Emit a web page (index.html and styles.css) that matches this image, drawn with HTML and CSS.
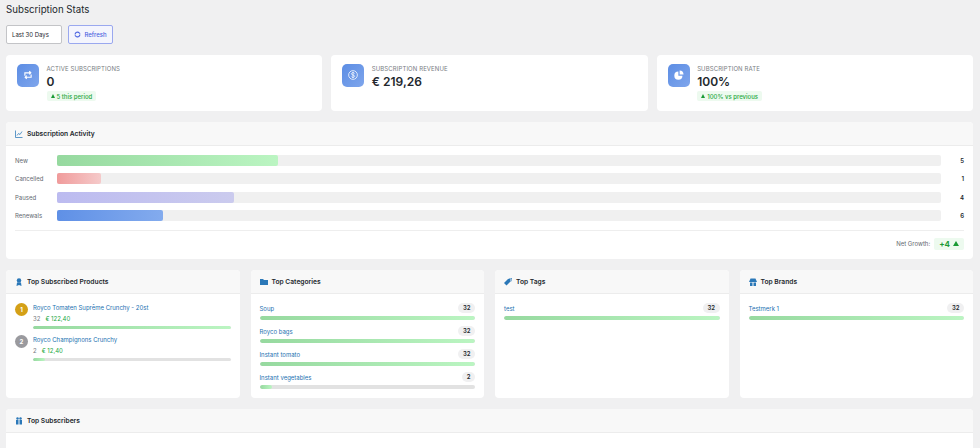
FILE: index.html
```html
<!DOCTYPE html>
<html lang="en">
<head>
  <meta charset="UTF-8" />
  <title>Subscription Stats</title>
  <link rel="stylesheet" href="styles.css">
</head>
<body>
  <h1>Subscription Stats</h1>

  <div class="toolbar">
    <div class="range">Last 30 Days</div>
    <button class="refresh">
      <svg width="7" height="7" viewBox="0 0 16 16" fill="none" stroke="#4a63e0" stroke-width="2.600"><path d="M2.500 8a5.500 5.500 0 0 1 9.500-3.800L14 6M13.500 8a5.500 5.500 0 0 1-9.500 3.800L2 10"/></svg>
      Refresh
    </button>
  </div>

  <div class="stats">
    <div class="stat">
      <div class="stat-icon">
        <svg width="10" height="10" viewBox="0 0 16 16" fill="none" stroke="#fff" stroke-width="1.800"><path d="M3 9V4.500h9M10 2l2.500 2.500L10 7M13 7v4.500H4M6 14l-2.500-2.500L6 9"/></svg>
      </div>
      <div>
        <div class="stat-label">ACTIVE SUBSCRIPTIONS</div>
        <div class="stat-value">0</div>
        <div class="trend"><span class="tri"></span>5 this period</div>
      </div>
    </div>
    <div class="stat">
      <div class="stat-icon">
        <svg width="10" height="10" viewBox="0 0 16 16" fill="none" stroke="#fff" stroke-width="1.200"><circle cx="8" cy="8" r="7"/><path d="M10.500 5.500C10 4.500 9 4.200 8 4.200c-1.400 0-2.500.7-2.500 1.900 0 2.700 5 1.200 5 3.800 0 1.200-1.100 1.900-2.500 1.900-1.100 0-2.100-.4-2.600-1.400M8 3v10"/></svg>
      </div>
      <div>
        <div class="stat-label">SUBSCRIPTION REVENUE</div>
        <div class="stat-value">€ 219,26</div>
      </div>
    </div>
    <div class="stat">
      <div class="stat-icon">
        <svg width="10" height="10" viewBox="0 0 16 16" fill="#fff"><path d="M7 2.500a6.500 6.500 0 1 0 6.500 6.500H7z"/><path d="M9 .8V7h6.200A6.400 6.400 0 0 0 9 .8z"/></svg>
      </div>
      <div>
        <div class="stat-label">SUBSCRIPTION RATE</div>
        <div class="stat-value">100%</div>
        <div class="trend"><span class="tri"></span>100% vs previous</div>
      </div>
    </div>
  </div>

  <section class="card activity">
    <div class="card-head">
      <svg viewBox="0 0 16 16" fill="none" stroke="#2b78b8" stroke-width="1.500"><path d="M1 1v14h14"/><path d="M4 11l3-4 3 2 4-6"/></svg>
      Subscription Activity
    </div>
    <div class="activity-body">
      <div class="bar-row">
        <span class="bar-label">New</span>
        <div class="track"><div class="fill green" style="width:25%"></div></div>
        <span class="bar-num">5</span>
      </div>
      <div class="bar-row">
        <span class="bar-label">Cancelled</span>
        <div class="track"><div class="fill red" style="width:5%"></div></div>
        <span class="bar-num">1</span>
      </div>
      <div class="bar-row">
        <span class="bar-label">Paused</span>
        <div class="track"><div class="fill purple" style="width:20%"></div></div>
        <span class="bar-num">4</span>
      </div>
      <div class="bar-row">
        <span class="bar-label">Renewals</span>
        <div class="track"><div class="fill blue" style="width:12%"></div></div>
        <span class="bar-num">6</span>
      </div>
      <div class="net">
        Net Growth:
        <span class="net-pill">+4 <span class="tri big"></span></span>
      </div>
    </div>
  </section>

  <div class="tops">
    <section class="card">
      <div class="card-head">
        <svg viewBox="0 0 16 16" fill="#2b78b8"><circle cx="8" cy="5" r="4.500"/><path d="M4 9l-1 7 5-2 5 2-1-7z"/></svg>
        Top Subscribed Products
      </div>
      <div class="products">
        <div class="product">
          <span class="rank gold">1</span>
          <div class="product-main">
            <a class="link">Royco Tomaten Suprême Crunchy - 20st</a>
            <div class="product-meta"><span>32</span><span class="price">€ 122,40</span></div>
            <div class="thin"><div class="fill green" style="width:100%"></div></div>
          </div>
        </div>
        <div class="product">
          <span class="rank grey">2</span>
          <div class="product-main">
            <a class="link">Royco Champignons Crunchy</a>
            <div class="product-meta"><span>2</span><span class="price">€ 12,40</span></div>
            <div class="thin"><div class="fill green" style="width:6%"></div></div>
          </div>
        </div>
      </div>
    </section>

    <section class="card">
      <div class="card-head">
        <svg viewBox="0 0 16 16" fill="#2b78b8"><path d="M0 2h6l2 2h8v10H0z"/></svg>
        Top Categories
      </div>
      <div class="list">
        <div class="item">
          <div class="item-top"><a class="link">Soup</a><span class="count">32</span></div>
          <div class="thick"><div class="fill green" style="width:100%"></div></div>
        </div>
        <div class="item">
          <div class="item-top"><a class="link">Royco bags</a><span class="count">32</span></div>
          <div class="thick"><div class="fill green" style="width:100%"></div></div>
        </div>
        <div class="item">
          <div class="item-top"><a class="link">Instant tomato</a><span class="count">32</span></div>
          <div class="thick"><div class="fill green" style="width:100%"></div></div>
        </div>
        <div class="item">
          <div class="item-top"><a class="link">Instant vegetables</a><span class="count">2</span></div>
          <div class="thick"><div class="fill green" style="width:6%"></div></div>
        </div>
      </div>
    </section>

    <section class="card">
      <div class="card-head">
        <svg viewBox="0 0 16 16" fill="#2b78b8"><path d="M0 10l8-8h5v5l-8 8z"/><path d="M10 0h6v6l-1 1V1H9z"/></svg>
        Top Tags
      </div>
      <div class="list">
        <div class="item">
          <div class="item-top"><a class="link">test</a><span class="count">32</span></div>
          <div class="thick"><div class="fill green" style="width:100%"></div></div>
        </div>
      </div>
    </section>

    <section class="card">
      <div class="card-head">
        <svg viewBox="0 0 16 16" fill="#2b78b8"><path d="M3 1h10l3 7H0z"/><path d="M2 9h5v7H2zM9 9h5v7H9z"/></svg>
        Top Brands
      </div>
      <div class="list">
        <div class="item">
          <div class="item-top"><a class="link">Testmerk 1</a><span class="count">32</span></div>
          <div class="thick"><div class="fill green" style="width:100%"></div></div>
        </div>
      </div>
    </section>
  </div>

  <section class="card subscribers">
    <div class="card-head">
      <svg viewBox="0 0 16 16" fill="#2b78b8"><circle cx="5" cy="3" r="2.500"/><circle cx="11" cy="3" r="2.500"/><path d="M2 6h5v9H2zM9 6h5v9H9z"/></svg>
      Top Subscribers
    </div>
  </section>
</body>
</html>
```

FILE: styles.css
```css
* {
  box-sizing: border-box;
}
html, body {
  height: 448px;
  overflow: hidden;
}
body {
  margin: 0;
  padding: 3px 7px 0 6px;
  background: #f0f0f1;
  font-family: Inter, "Liberation Sans", sans-serif;
  color: #23282d;
}
h1 {
  margin: 0;
  font-size: 9.700px;
  line-height: 14px;
  font-weight: 400;
}
.toolbar {
  display: flex;
  gap: 6px;
  margin-top: 8px;
}
.range {
  width: 56px;
  height: 19px;
  padding-left: 5px;
  background: #fff;
  border: 1px solid #c3c4c7;
  border-radius: 2px;
  font-size: 6px;
  line-height: 17px;
}
.refresh {
  width: 45px;
  height: 19px;
  padding: 0;
  display: flex;
  align-items: center;
  justify-content: center;
  gap: 3px;
  background: #f4f5fd;
  border: 1px solid #9aa8ef;
  border-radius: 2px;
  color: #4a63e0;
  font-family: inherit;
  font-size: 6px;
  font-weight: 500;
}
.stats {
  display: grid;
  grid-template-columns: repeat(3, 1fr);
  gap: 9px;
  margin-top: 11px;
}
.stat {
  height: 56px;
  display: flex;
  gap: 7.500px;
  padding: 9px 11px;
  background: #fff;
  border-radius: 4px;
}
.stat-icon {
  width: 22px;
  height: 22.500px;
  flex: none;
  display: flex;
  align-items: center;
  justify-content: center;
  background: linear-gradient(135deg, #5c8de4, #7fa6ec);
  border-radius: 5px;
}
.stat-label {
  margin-top: 1px;
  font-size: 6px;
  line-height: 8px;
  letter-spacing: 0.100px;
  color: #787c82;
}
.stat-value {
  margin-top: 1px;
  font-size: 12px;
  line-height: 16px;
  font-weight: 600;
}
.trend {
  display: flex;
  width: fit-content;
  align-items: center;
  gap: 2px;
  height: 10px;
  margin-top: 1px;
  padding: 0 4px;
  background: #edfaef;
  border-radius: 2px;
  color: #1fa83c;
  font-size: 6px;
  font-weight: 500;
}
.tri {
  width: 0;
  height: 0;
  border-left: 2px solid transparent;
  border-right: 2px solid transparent;
  border-bottom: 4px solid #1a9a35;
}
.tri.big {
  display: inline-block;
  border-left-width: 3px;
  border-right-width: 3px;
  border-bottom-width: 5px;
}
.card {
  background: #fff;
  border-radius: 4px;
  overflow: hidden;
}
.card-head {
  height: 24px;
  display: flex;
  align-items: center;
  gap: 4px;
  padding: 0 9px;
  background: #f8f8f8;
  border-bottom: 1px solid #ececec;
  font-size: 6.700px;
  font-weight: 600;
}
.card-head svg {
  width: 8px;
  height: 8px;
  flex: none;
}
.activity {
  height: 137px;
  margin-top: 11px;
}
.activity-body {
  padding: 9px 9px 0;
}
.bar-row {
  display: flex;
  align-items: center;
  height: 11px;
  margin-bottom: 7.300px;
}
.bar-label {
  width: 42px;
  flex: none;
  font-size: 6px;
  color: #646970;
}
.track {
  flex: 1;
  height: 11px;
  background: #f0f0f0;
  border-radius: 2px;
}
.bar-num {
  width: 23px;
  flex: none;
  text-align: right;
  font-size: 6px;
  font-weight: 600;
}
.fill {
  height: 100%;
  border-radius: 2px;
}
.green {
  background: linear-gradient(90deg, #96d99f, #bbf5c2);
}
.red {
  background: linear-gradient(90deg, #f09b9b, #f5caca);
}
.purple {
  background: linear-gradient(90deg, #bcbbf0, #cbcbee);
}
.blue {
  background: linear-gradient(90deg, #5f90e6, #83abee);
}
.net {
  display: flex;
  align-items: center;
  justify-content: flex-end;
  gap: 4px;
  margin-top: 9px;
  padding-top: 7px;
  border-top: 1px solid #eee;
  font-size: 6px;
  color: #646970;
}
.net-pill {
  display: flex;
  align-items: center;
  gap: 3px;
  height: 12px;
  padding: 0 5px;
  background: #edfaef;
  border-radius: 2px;
  color: #1a9a35;
  font-size: 8px;
  font-weight: 700;
}
.tops {
  display: grid;
  grid-template-columns: repeat(4, 1fr);
  gap: 11px;
  margin-top: 11px;
}
.tops .card {
  height: 128px;
}
.products {
  padding: 9px 9px 0;
}
.product {
  display: flex;
  gap: 5px;
  height: 32px;
}
.rank {
  width: 13px;
  height: 13px;
  flex: none;
  border-radius: 50%;
  text-align: center;
  color: #fff;
  font-size: 6px;
  font-weight: 700;
  line-height: 13px;
}
.gold {
  background: #d4a017;
}
.grey {
  background: #9a9a9e;
}
.product-main {
  flex: 1;
  min-width: 0;
}
.link {
  font-size: 6px;
  color: #2271b1;
}
.product-main .link {
  display: block;
  line-height: 9px;
}
.product-meta {
  display: flex;
  gap: 5px;
  margin-top: 2px;
  font-size: 6px;
  line-height: 9px;
  color: #787c82;
}
.price {
  color: #22a83f;
}
.thin {
  height: 3px;
  margin-top: 3px;
  background: #e2e2e2;
  border-radius: 2px;
  overflow: hidden;
}
.list {
  padding: 9px 9px 0;
  display: flex;
  flex-direction: column;
  gap: 6px;
}
.item-top {
  display: flex;
  justify-content: space-between;
  align-items: center;
  height: 10px;
}
.count {
  height: 10px;
  padding: 0 4.500px;
  background: #f0f0f1;
  border-radius: 5px;
  font-size: 6px;
  font-weight: 600;
  line-height: 10px;
}
.thick {
  height: 4px;
  margin-top: 3px;
  background: #e2e2e2;
  border-radius: 2px;
  overflow: hidden;
}
.subscribers {
  height: 60px;
  margin-top: 11px;
}
```
